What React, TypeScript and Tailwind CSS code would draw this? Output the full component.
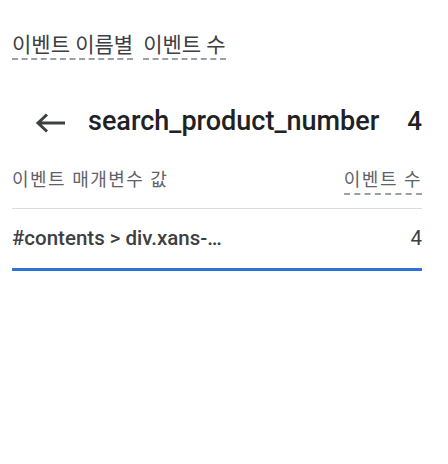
import React from "react";

const font = { fontFamily: "Roboto, 'Noto Sans CJK KR', sans-serif" };

export default function App() {
  return (
    <div className="w-[448px] h-[464px] bg-white text-[#3c4043]" style={font}>
      <div className="pl-3 pr-[26px] pt-[32px]">
        <div className="flex gap-[10px] text-[21px] leading-[26px] text-[#3c4043]">
          <span className="border-b-2 border-dashed border-[#9aa0a6]">이벤트 이름별</span>
          <span className="border-b-2 border-dashed border-[#9aa0a6]">이벤트 수</span>
        </div>

        <div className="flex items-center mt-[43px] h-[36px]">
          <div className="w-[76px] flex pl-[22px] pt-[4px]">
            <svg width="32" height="24" viewBox="0 0 32 24" fill="none">
              <path d="M31 12H4M13 3.5L4 12l9 8.5" stroke="#3c4043" strokeWidth="3" />
            </svg>
          </div>
          <div className="flex-1 text-[27px] font-medium text-[#202124]">search_product_number</div>
          <div className="text-[26px] font-medium text-[#202124]">4</div>
        </div>

        <div className="flex justify-between items-end mt-[29px] text-[18px] leading-[24px] text-[#5f6368] tracking-[1.5px]">
          <span className="pb-[3px]">이벤트 매개변수 값</span>
          <span className="border-b-2 border-dashed border-[#9aa0a6] pb-[1px]">이벤트 수</span>
        </div>
        <div className="border-b border-[#dadce0] mt-[13px]" />

        <div className="flex justify-between items-center h-[59px] text-[20.5px] font-medium text-[#3c4043]">
          <span>#contents &gt; div.xans-…</span>
          <span className="font-normal">4</span>
        </div>
        <div className="h-[3px] bg-[#2f73d8]" />
      </div>
    </div>
  );
}
